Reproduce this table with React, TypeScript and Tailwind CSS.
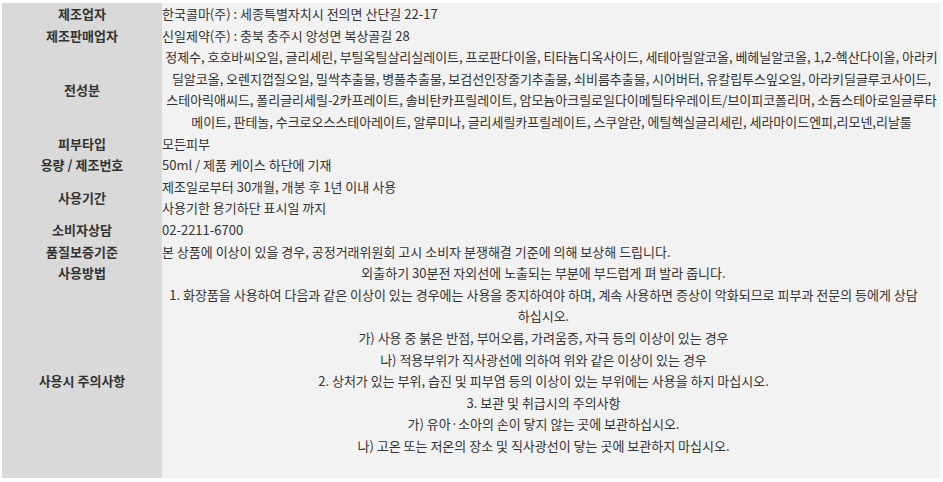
const font = { fontFamily: '"Noto Sans CJK KR", "Noto Sans", sans-serif' };

type Row = {
  label: string;
  lines: string[];
  align?: 'left' | 'center';
  extra?: number;
};

const rows: Row[] = [
  { label: '제조업자', lines: ['한국콜마(주) : 세종특별자치시 전의면 산단길 22-17'] },
  { label: '제조판매업자', lines: ['신일제약(주) : 충북 충주시 앙성면 복상골길 28'] },
  {
    label: '전성분',
    align: 'center',
    lines: [
      '정제수, 호호바씨오일, 글리세린, 부틸옥틸살리실레이트, 프로판다이올, 티타늄디옥사이드, 세테아릴알코올, 베헤닐알코올, 1,2-헥산다이올, 아라키',
      '딜알코올, 오렌지껍질오일, 밀싹추출물, 병풀추출물, 보검선인장줄기추출물, 쇠비름추출물, 시어버터, 유칼립투스잎오일, 아라키딜글루코사이드,',
      '스테아릭애씨드, 폴리글리세릴-2카프레이트, 솔비탄카프릴레이트, 암모늄아크릴로일다이메틸타우레이트/브이피코폴리머, 소듐스테아로일글루타',
      '메이트, 판테놀, 수크로오스스테아레이트, 알루미나, 글리세릴카프릴레이트, 스쿠알란, 에틸헥실글리세린, 세라마이드엔피,리모넨,리날룰',
    ],
  },
  { label: '피부타입', lines: ['모든피부'] },
  { label: '용량 / 제조번호', lines: ['50ml / 제품 케이스 하단에 기재'] },
  { label: '사용기간', lines: ['제조일로부터 30개월, 개봉 후 1년 이내 사용', '사용기한 용기하단 표시일 까지'] },
  { label: '소비자상담', lines: ['02-2211-6700'] },
  { label: '품질보증기준', lines: ['본 상품에 이상이 있을 경우, 공정거래위원회 고시 소비자 분쟁해결 기준에 의해 보상해 드립니다.'] },
  { label: '사용방법', align: 'center', lines: ['외출하기 30분전 자외선에 노출되는 부분에 부드럽게 펴 발라 줍니다.'] },
  {
    label: '사용시 주의사항',
    align: 'center',
    extra: 1,
    lines: [
      '1. 화장품을 사용하여 다음과 같은 이상이 있는 경우에는 사용을 중지하여야 하며, 계속 사용하면 증상이 악화되므로 피부과 전문의 등에게 상담',
      '하십시오.',
      '가) 사용 중 붉은 반점, 부어오름, 가려움증, 자극 등의 이상이 있는 경우',
      '나) 적용부위가 직사광선에 의하여 위와 같은 이상이 있는 경우',
      '2. 상처가 있는 부위, 습진 및 피부염 등의 이상이 있는 부위에는 사용을 하지 마십시오.',
      '3. 보관 및 취급시의 주의사항',
      '가) 유아·소아의 손이 닿지 않는 곳에 보관하십시오.',
      '나) 고온 또는 저온의 장소 및 직사광선이 닿는 곳에 보관하지 마십시오.',
    ],
  },
];

export default function App() {
  return (
    <div className="h-[482px] w-[943px] bg-white px-[2px] pt-[3px]" style={font}>
      <div className="grid w-[939px] grid-cols-[160px_779px] text-[13px] leading-[21.6px] text-[#333]">
        {rows.map((row) => (
          <div key={row.label} className="contents">
            <div className="flex items-center justify-center bg-[#d9d9d9] font-bold text-[#333]">
              {row.label}
            </div>
            <div
              className={
                row.label === '전성분'
                  ? 'overflow-hidden bg-[#f2f2f2] text-center tracking-[-0.03px]'
                  : row.align === 'center'
                    ? 'bg-[#f2f2f2] pr-[16px] text-center'
                    : 'bg-[#f2f2f2] text-left'
              }
            >
              {row.lines.map((line, i) => (
                <div key={i} className="whitespace-nowrap">
                  {line}
                </div>
              ))}
              {row.extra ? <div className="h-[21.6px]" /> : null}
            </div>
          </div>
        ))}
      </div>
    </div>
  );
}
